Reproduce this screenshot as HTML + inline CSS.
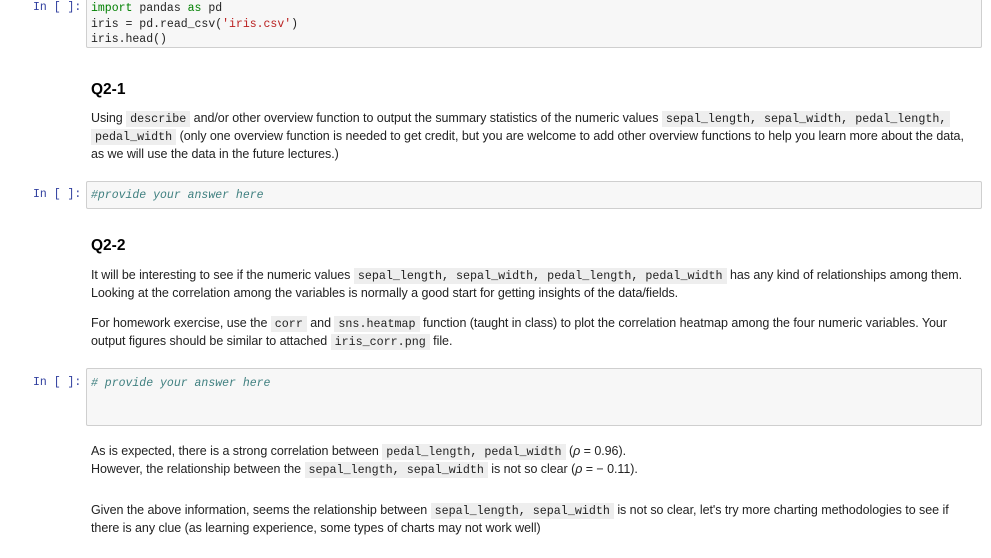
<!DOCTYPE html>
<html><head><meta charset="utf-8"><style>
body{margin:0;width:991px;height:558px;background:#fff;position:relative;overflow:hidden;font-family:"Liberation Sans",Arial,sans-serif;color:#222}
.p{position:absolute;left:33px;font-family:"Liberation Mono",monospace;font-size:11.5px;color:#303f9f}
.cell{position:absolute;left:86px;width:894px;background:#f7f7f7;border:1px solid #cfcfcf;border-radius:2px}
.code{position:absolute;left:91px;font-family:"Liberation Mono",monospace;font-size:11.5px;color:#222;white-space:pre;line-height:15.5px}
.t{position:absolute;left:91px;font-size:12.5px;letter-spacing:-0.05px;white-space:nowrap;line-height:18px}
.t code,.c{font-family:"Liberation Mono",monospace;font-size:11.7px;letter-spacing:0;background:#eee;padding:1px 4px}
h4{position:absolute;left:91px;margin:0;font-size:15.5px;font-weight:bold;color:#000}
.k{color:#008000}.s{color:#ba2121}.cm{color:#408080;font-style:italic}
</style></head><body>
<div class="cell" style="top:-2px;height:48px"></div>
<div class="p" style="top:1px">In [ ]:</div>
<div class="code" style="top:1px"><span class="k">import</span> pandas <span class="k">as</span> pd
iris = pd.read_csv(<span class="s">'iris.csv'</span>)
iris.head()</div>

<h4 style="top:81px">Q2-1</h4>
<div class="t" style="top:109px">Using <code>describe</code> and/or other overview function to output the summary statistics of the numeric values <code>sepal_length, sepal_width, pedal_length,</code></div>
<div class="t" style="top:127px"><code>pedal_width</code> (only one overview function is needed to get credit, but you are welcome to add other overview functions to help you learn more about the data,</div>
<div class="t" style="top:145px">as we will use the data in the future lectures.)</div>

<div class="cell" style="top:181px;height:26px"></div>
<div class="p" style="top:188px">In [ ]:</div>
<div class="code cm" style="top:188px">#provide your answer here</div>

<h4 style="top:237px">Q2-2</h4>
<div class="t" style="top:266px">It will be interesting to see if the numeric values <code>sepal_length, sepal_width, pedal_length, pedal_width</code> has any kind of relationships among them.</div>
<div class="t" style="top:284px">Looking at the correlation among the variables is normally a good start for getting insights of the data/fields.</div>
<div class="t" style="top:314px">For homework exercise, use the <code>corr</code> and <code>sns.heatmap</code> function (taught in class) to plot the correlation heatmap among the four numeric variables. Your</div>
<div class="t" style="top:332px">output figures should be similar to attached <code>iris_corr.png</code> file.</div>

<div class="cell" style="top:368px;height:56px"></div>
<div class="p" style="top:376px">In [ ]:</div>
<div class="code cm" style="top:376px"># provide your answer here</div>

<div class="t" style="top:442px">As is expected, there is a strong correlation between <code>pedal_length, pedal_width</code> (<i>ρ</i> = 0.96).</div>
<div class="t" style="top:460px">However, the relationship between the <code>sepal_length, sepal_width</code> is not so clear (<i>ρ</i> = − 0.11).</div>
<div class="t" style="top:501px">Given the above information, seems the relationship between <code>sepal_length, sepal_width</code> is not so clear, let's try more charting methodologies to see if</div>
<div class="t" style="top:519px">there is any clue (as learning experience, some types of charts may not work well)</div>
</body></html>
